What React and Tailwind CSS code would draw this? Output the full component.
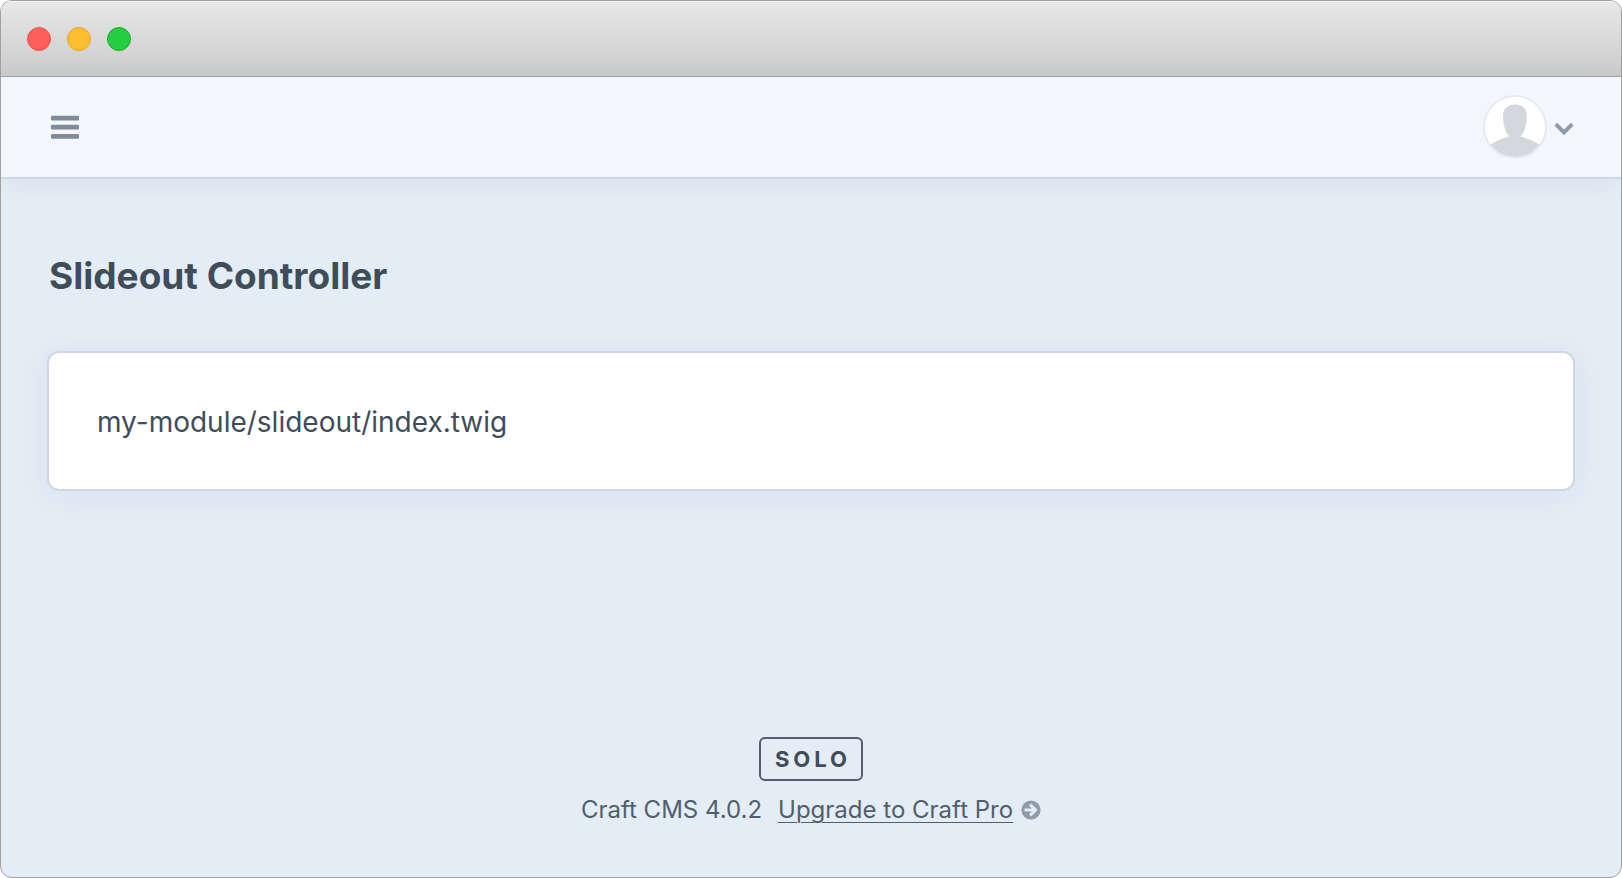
function WindowBar() {
  return (
    <div className="flex h-[76px] shrink-0 items-center gap-4 border-b border-[#a3a3a3] bg-linear-to-b from-[#e8e8e8] to-[#cbcbcb] pl-[26px] shadow-[inset_0_1px_0_#f6f6f6]">
      <button aria-label="Close" className="size-6 rounded-full border border-[#e9524a] bg-[#ff6059]" />
      <button aria-label="Minimize" className="size-6 rounded-full border border-[#e1a32d] bg-[#ffbe2f]" />
      <button aria-label="Zoom" className="size-6 rounded-full border border-[#1daa2c] bg-[#29cd41]" />
    </div>
  );
}

function Header() {
  return (
    <header className="flex h-[102px] shrink-0 items-center justify-between border-b-2 border-[#cdd8e4] bg-[#f3f7fc] pr-[47px] pl-[50px] shadow-[0_2px_24px_rgba(31,95,134,0.07)]">
      <button aria-label="Toggle navigation">
        <svg viewBox="0 0 28 24" className="h-6 w-7" fill="#7f8b98">
          <rect y="0.7" width="28" height="4.8" rx="1.2" />
          <rect y="9.8" width="28" height="4.8" rx="1.2" />
          <rect y="18.9" width="28" height="4.8" rx="1.2" />
        </svg>
      </button>
      <button aria-label="My Account" className="flex items-center gap-[7px]">
        <svg viewBox="0 0 64 64" className="size-16">
          <defs>
            <clipPath id="avatar">
              <circle cx="32" cy="32" r="30" />
            </clipPath>
          </defs>
          <circle cx="32" cy="32" r="32" fill="#e6ebf1" />
          <circle cx="32" cy="32" r="30" fill="#fff" />
          <g clipPath="url(#avatar)" fill="#d4d8dd">
            <path d="M32 9.5C24.5 9.5 20 13.5 20 21C20 30 22.3 37 26.4 41.6C20 43 13 46 5 51V64H59V51C51 46 44 43 37.6 41.6C41.7 37 43.8 30 43.8 21C43.8 13.5 39.5 9.5 32 9.5Z" />
          </g>
        </svg>
        <svg viewBox="0 0 20 14" className="mt-1 h-[14px] w-5" fill="none" stroke="#8f9ba8" strokeWidth="4">
          <path d="M1.8 2.2L10 10.4L18.2 2.2" />
        </svg>
      </button>
    </header>
  );
}

function Footer() {
  return (
    <footer className="flex flex-col items-center gap-[13px] pb-[51px] text-2xl text-[#515f6c]">
      <div className="flex h-11 items-center rounded-md border-2 border-[#515f6c] pt-[2px] pr-[10px] pl-[14px] text-[22px] font-bold tracking-[4px] text-[#3f4d5a]">
        SOLO
      </div>
      <div className="flex items-center">
        <span className="mr-4">Craft CMS 4.0.2</span>
        <a href="#upgrade" className="mr-2 underline decoration-1 underline-offset-4">
          Upgrade to Craft Pro
        </a>
        <svg viewBox="0 0 20 20" className="size-5">
          <circle cx="10" cy="10" r="9.6" fill="#8f9ba8" />
          <path d="M3.6 10H13.5M9.1 4.6L14.5 10L9.1 15.4" fill="none" stroke="#e4ecf5" strokeWidth="3" />
        </svg>
      </div>
    </footer>
  );
}

export default function App() {
  return (
    <div className="flex min-h-screen flex-col overflow-hidden rounded-xl border border-[#a0a0a0] bg-[#e4ecf5] font-['Inter',sans-serif] text-[#3f4d5a]">
      <WindowBar />
      <Header />
      <main className="flex flex-1 flex-col px-[46px] pt-[74px]">
        <h1 className="px-[2px] text-[37px] leading-[46px] font-bold">Slideout Controller</h1>
        <section className="mt-[52px] rounded-xl border-2 border-[#cdd8e4] bg-white px-12 pt-[49px] pb-[47px] text-[28px] leading-10 shadow-[0_4px_32px_rgba(31,95,134,0.06)]">
          my-module/slideout/index.twig
        </section>
      </main>
      <Footer />
    </div>
  );
}
